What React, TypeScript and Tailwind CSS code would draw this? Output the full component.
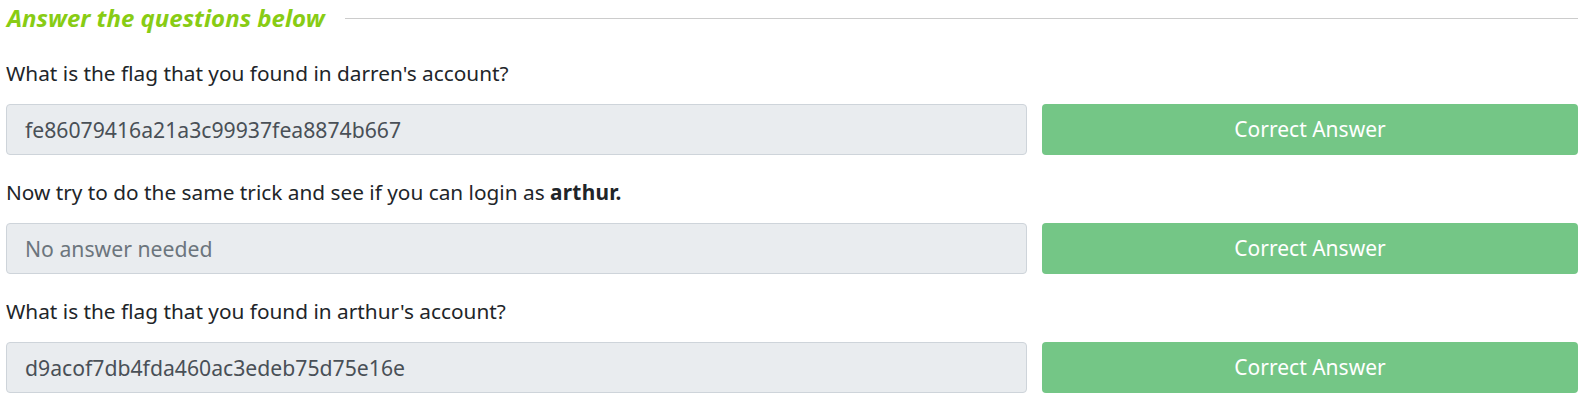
import React from "react";

const font = { fontFamily: '"Noto Sans", "Open Sans", sans-serif' };

function Question({ label, value, placeholder }: { label: React.ReactNode; value?: string; placeholder?: string }) {
  return (
    <div className="mt-[24px]">
      <div className="text-[20.8px] leading-[27px] text-[#212529]">{label}</div>
      <div className="mt-[17px] flex h-[51px] gap-[15px]">
        <div className="flex w-[1021px] items-center rounded-[4px] border border-[#ced4da] bg-[#e9ecef] pl-[18px] text-[21.2px]">
          {value ? (
            <span className="text-[#495057]">{value}</span>
          ) : (
            <span className="text-[#6c757d]">{placeholder}</span>
          )}
        </div>
        <button className="flex flex-1 items-center justify-center rounded-[4px] bg-[#74c686] text-[21px] text-white">
          Correct Answer
        </button>
      </div>
    </div>
  );
}

export default function App() {
  return (
    <div className="h-[418px] w-[1595px] bg-white pl-[6px] pr-[17px]" style={font}>
      <div className="flex h-[36px] items-center">
        <h4 className="pl-[1px] text-[24px] font-bold italic text-[#88cc14]">Answer the questions below</h4>
        <div className="ml-[20px] h-px flex-1 bg-[#cccccc]" />
      </div>
      <Question label="What is the flag that you found in darren's account?" value="fe86079416a21a3c99937fea8874b667" />
      <Question
        label={
          <>
            Now try to do the same trick and see if you can login as <b className="font-bold tracking-[0.3px]">arthur.</b>
          </>
        }
        placeholder="No answer needed"
      />
      <Question label="What is the flag that you found in arthur's account?" value="d9acof7db4fda460ac3edeb75d75e16e" />
    </div>
  );
}
